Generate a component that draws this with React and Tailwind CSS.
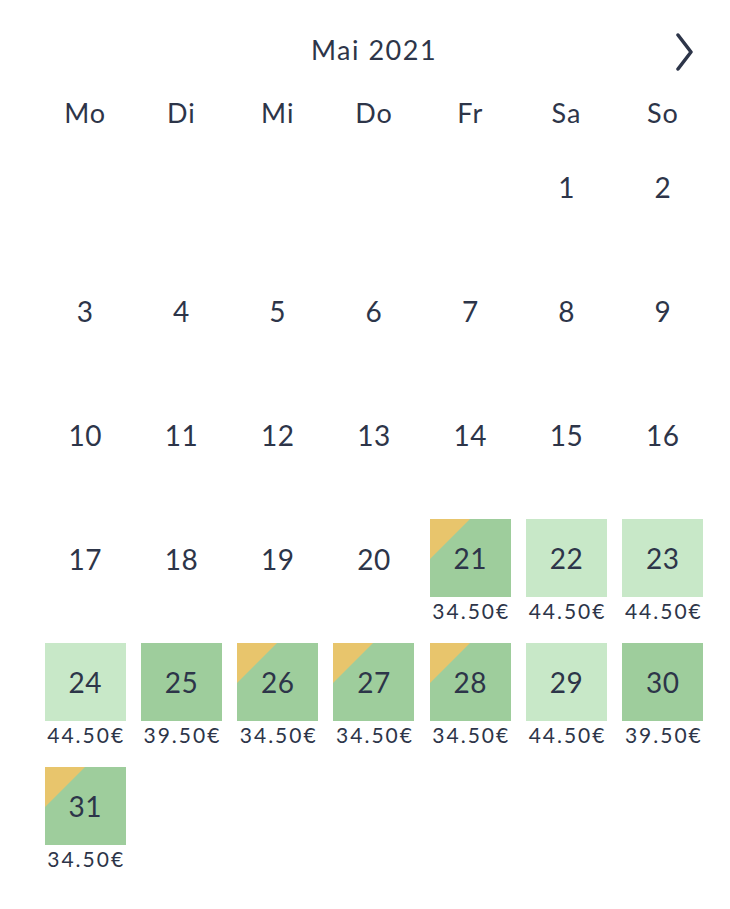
const days = ["Mo", "Di", "Mi", "Do", "Fr", "Sa", "So"];

// leere Felder bis Samstag, dann 1..31
const cells = [
  ...Array(5).fill(null),
  ...Array.from({ length: 31 }, (_, i) => i + 1),
];

const prices = {
  21: { price: "34.50€", tone: "dark", promo: true },
  22: { price: "44.50€", tone: "light" },
  23: { price: "44.50€", tone: "light" },
  24: { price: "44.50€", tone: "light" },
  25: { price: "39.50€", tone: "dark" },
  26: { price: "34.50€", tone: "dark", promo: true },
  27: { price: "34.50€", tone: "dark", promo: true },
  28: { price: "34.50€", tone: "dark", promo: true },
  29: { price: "44.50€", tone: "light" },
  30: { price: "39.50€", tone: "dark" },
  31: { price: "34.50€", tone: "dark", promo: true },
};

function DayCell({ day }) {
  if (day === null) return <div />;
  const info = prices[day];
  if (!info) {
    return (
      <div className="flex flex-col items-center">
        <div className="w-[81px] h-[80px] flex items-center justify-center text-[28px] tracking-[0.5px]">{day}</div>
      </div>
    );
  }
  return (
    <div className="flex flex-col items-center">
      <div
        className={
          "relative w-[81px] h-[80px] flex items-center justify-center text-[28px] tracking-[0.5px] overflow-hidden " +
          (info.tone === "dark" ? "bg-[#9ecd9c]" : "bg-[#c8e8c8]")
        }
      >
        {info.promo && (
          <svg className="absolute left-0 top-0" width="40" height="40" viewBox="0 0 40 40">
            <polygon points="0,0 40,0 0,40" fill="#e8c56c" />
          </svg>
        )}
        <span className="relative">{day}</span>
      </div>
      <div className="text-[21px] leading-[24px] pt-[2px] pl-[2px] tracking-[2px]">{info.price}</div>
    </div>
  );
}

export default function App() {
  return (
    <div className="w-[730px] h-[909px] bg-white text-[#2d3549] font-['Lato',sans-serif]">
      <div className="w-[674px] ml-[37px] pt-[30px]">
        <div className="relative h-[40px] flex items-center justify-center">
          <span className="text-[27px] tracking-[1.5px]">Mai 2021</span>
          <svg className="absolute right-[18px] top-[3px]" width="17" height="38" viewBox="0 0 17 38" fill="none">
            <polyline points="2,2 15,19 2,36" stroke="#2d3549" strokeWidth="3.5" strokeLinecap="round" strokeLinejoin="round" />
          </svg>
        </div>
        <div className="grid grid-cols-7 mt-[23px] h-[40px] items-center">
          {days.map((d) => (
            <div key={d} className="text-center text-[27px] tracking-[1px]">{d}</div>
          ))}
        </div>
        <div className="grid grid-cols-7 mt-[14px] gap-y-[20px] auto-rows-[104px]">
          {cells.map((d, i) => (
            <DayCell key={i} day={d} />
          ))}
        </div>
      </div>
    </div>
  );
}
